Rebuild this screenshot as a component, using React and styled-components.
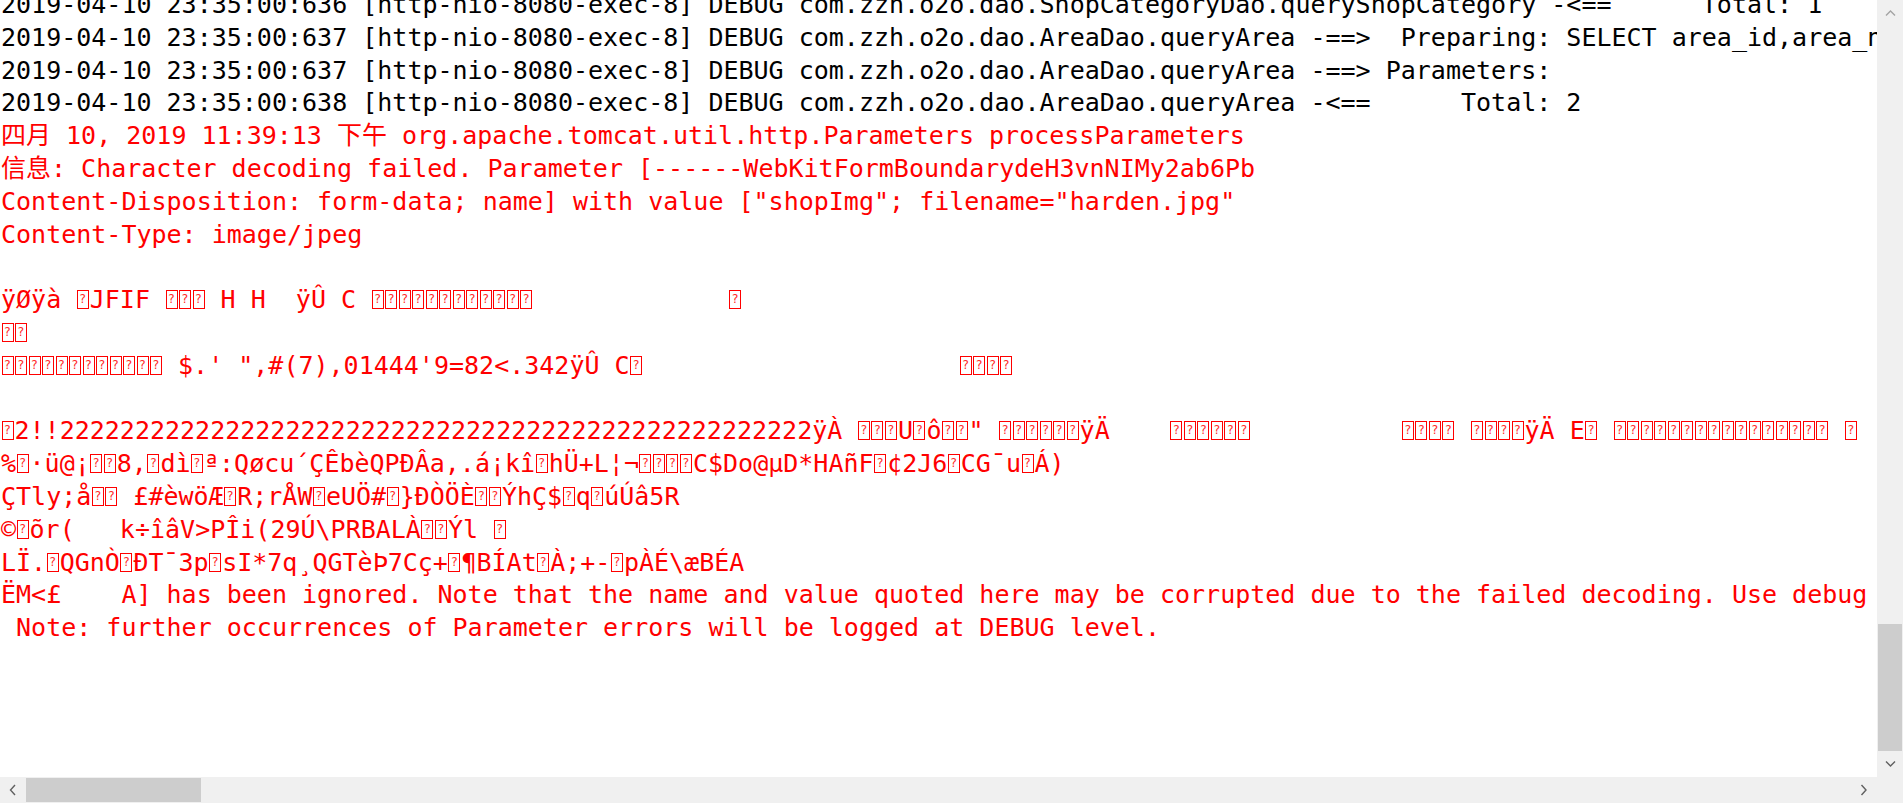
import React from "react";
import styled, { createGlobalStyle } from "styled-components";

const GlobalStyle = createGlobalStyle`
  html, body {
    margin: 0;
    padding: 0;
    background: #ffffff;
    overflow: hidden;
  }
  #root {
    width: 100vw;
    height: 100vh;
  }
`;

const Window = styled.div`
  width: 1903px;
  height: 803px;
  display: grid;
  grid-template-columns: 1fr 26px;
  grid-template-rows: 1fr 26px;
  background: #ffffff;
  overflow: hidden;
`;

const Viewport = styled.div`
  min-width: 0;
  min-height: 0;
  overflow: hidden;
`;

const Log = styled.div`
  margin-top: -11px;
  padding-left: 1px;
  font-family: "DejaVu Sans Mono", "Noto Sans CJK SC", monospace;
  font-size: 25px;
  line-height: 32.8px;
  white-space: pre;
`;

const Line = styled.div`
  height: 32.8px;
  color: ${(p) => (p.$tone === "error" ? "#ff0000" : "#000000")};
`;

const Tofu = styled.span`
  display: inline-block;
  box-sizing: border-box;
  width: 12px;
  height: 19px;
  margin: 0 1px 0 0.5px;
  border: 1px solid #ff0000;
  overflow: hidden;
  vertical-align: -1px;
  font-family: "DejaVu Sans", sans-serif;
  font-size: 12px;
  line-height: 16px;
  text-align: center;
  color: #ff2a2a;
`;

const VScroll = styled.div`
  display: flex;
  flex-direction: column;
  background: #f0f0f0;
`;

const HScroll = styled.div`
  display: flex;
  flex-direction: row;
  background: #f0f0f0;
`;

const Corner = styled.div`
  background: #f0f0f0;
`;

const ArrowButton = styled.div`
  flex: 0 0 26px;
  width: 26px;
  height: 26px;
  display: flex;
  align-items: center;
  justify-content: center;
  color: ${(p) => (p.$dim ? "#a3a3a3" : "#606060")};
`;

const VTrack = styled.div`
  flex: 1;
  display: flex;
  flex-direction: column;
  justify-content: flex-end;
  padding: 0 1px;
`;

const HTrack = styled.div`
  flex: 1;
  display: flex;
  flex-direction: row;
  justify-content: flex-start;
  padding: 1px 0;
`;

const Thumb = styled.div`
  background: #cdcdcd;
  flex: 0 0 ${(p) => p.$length}px;
`;

const TOFU = "\u25A1";

function renderText(text) {
  const parts = text.split(TOFU);
  const out = [];
  parts.forEach((part, i) => {
    if (i > 0) out.push(<Tofu key={"t" + i}>?</Tofu>);
    if (part) out.push(<React.Fragment key={"s" + i}>{part}</React.Fragment>);
  });
  return out;
}

const B = TOFU;
const lines = [
  { tone: "debug", text: "2019-04-10 23:35:00:636 [http-nio-8080-exec-8] DEBUG com.zzh.o2o.dao.ShopCategoryDao.queryShopCategory -<==      Total: 1" },
  { tone: "debug", text: "2019-04-10 23:35:00:637 [http-nio-8080-exec-8] DEBUG com.zzh.o2o.dao.AreaDao.queryArea -==>  Preparing: SELECT area_id,area_name,priority,create_time,last_edit_time FROM tb_area ORDER BY priority DESC " },
  { tone: "debug", text: "2019-04-10 23:35:00:637 [http-nio-8080-exec-8] DEBUG com.zzh.o2o.dao.AreaDao.queryArea -==> Parameters: " },
  { tone: "debug", text: "2019-04-10 23:35:00:638 [http-nio-8080-exec-8] DEBUG com.zzh.o2o.dao.AreaDao.queryArea -<==      Total: 2" },
  { tone: "error", text: "四月 10, 2019 11:39:13 下午 org.apache.tomcat.util.http.Parameters processParameters" },
  { tone: "error", text: "信息: Character decoding failed. Parameter [------WebKitFormBoundarydeH3vnNIMy2ab6Pb" },
  { tone: "error", text: 'Content-Disposition: form-data; name] with value ["shopImg"; filename="harden.jpg"' },
  { tone: "error", text: "Content-Type: image/jpeg" },
  { tone: "error", text: "" },
  { tone: "error", text: `ÿØÿà ${B}JFIF ${B.repeat(3)} H H  ÿÛ C ${B.repeat(12)}${" ".repeat(13)}${B}` },
  { tone: "error", text: B.repeat(2) },
  { tone: "error", text: `${B.repeat(12)} $.' ",#(7),01444'9=82<.342ÿÛ C${B}${" ".repeat(21)}${B.repeat(4)}` },
  { tone: "error", text: "" },
  { tone: "error", text: `${B}2!!${"2".repeat(50)}ÿÀ ${B.repeat(3)}U${B}ô${B.repeat(2)}" ${B.repeat(6)}ÿÄ    ${B.repeat(6)}${" ".repeat(10)}${B.repeat(4)} ${B.repeat(4)}ÿÄ E${B} ${B.repeat(16)} ${B}` },
  { tone: "error", text: `%${B}·ü@¡${B.repeat(2)}8,${B}dì${B}ª:Qøcu´ÇÊbèQPÐÂa,.á¡kî${B}hÜ+L¦¬${B.repeat(4)}C$Do@µD*HAñF${B}¢2J6${B}CG¯u${B}Á)` },
  { tone: "error", text: `ÇTly;å${B.repeat(2)} £#èwöÆ${B}R;rÅW${B}eUÖ#${B}}ÐÒÖÈ${B.repeat(2)}ÝhÇ$${B}q${B}úÚâ5R` },
  { tone: "error", text: `©${B}õr(   k÷îâV>PÎi(29Ú\\PRBALÀ${B.repeat(2)}Ýl ${B}` },
  { tone: "error", text: `LÏ.${B}QGnÒ${B}ÐT¯3p${B}sI*7q¸QGTèÞ7Cç+${B}¶BÍAt${B}À;+-${B}pÀÉ\\æBÉA` },
  { tone: "error", text: "ËM<£    A] has been ignored. Note that the name and value quoted here may be corrupted due to the failed decoding. Use debug level logging to see the original, non-corrupted values." },
  { tone: "error", text: " Note: further occurrences of Parameter errors will be logged at DEBUG level." },
];

const Chevron = ({ dir }) => {
  const paths = {
    up: "M1 6.5 L5.5 2 L10 6.5",
    down: "M1 1.5 L5.5 6 L10 1.5",
    left: "M6 1 L1.5 6 L6 11",
    right: "M1.5 1 L6 6 L1.5 11",
  };
  const vertical = dir === "up" || dir === "down";
  const w = vertical ? 11 : 8;
  const h = vertical ? 8 : 12;
  return (
    <svg width={w} height={h} viewBox={`0 0 ${w} ${h}`} fill="none">
      <path d={paths[dir]} stroke="currentColor" strokeWidth="1.4" />
    </svg>
  );
};

export default function App() {
  return (
    <>
      <GlobalStyle />
      <Window>
        <Viewport>
          <Log>
            {lines.map((l, i) => (
              <Line key={i} $tone={l.tone}>
                {l.text ? renderText(l.text) : " "}
              </Line>
            ))}
          </Log>
        </Viewport>
        <VScroll>
          <ArrowButton $dim>
            <Chevron dir="up" />
          </ArrowButton>
          <VTrack>
            <Thumb $length={127} />
          </VTrack>
          <ArrowButton>
            <Chevron dir="down" />
          </ArrowButton>
        </VScroll>
        <HScroll>
          <ArrowButton>
            <Chevron dir="left" />
          </ArrowButton>
          <HTrack>
            <Thumb $length={175} />
          </HTrack>
          <ArrowButton>
            <Chevron dir="right" />
          </ArrowButton>
        </HScroll>
        <Corner />
      </Window>
    </>
  );
}
